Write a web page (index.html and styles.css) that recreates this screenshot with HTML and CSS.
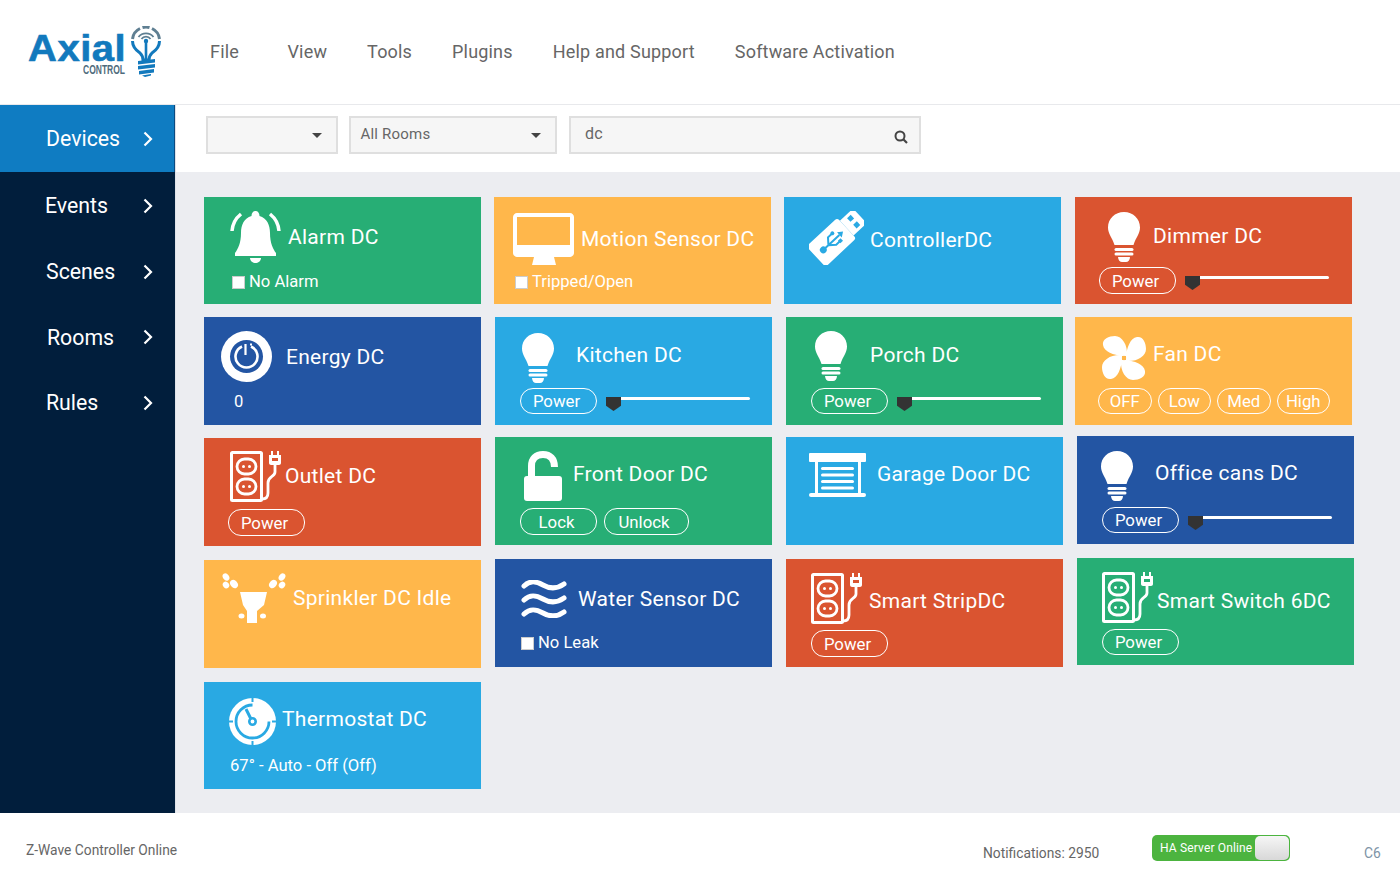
FILE: index.html
```html
<!DOCTYPE html>
<html lang="en">
<head>
<meta charset="utf-8">
<title>Axial Control</title>
<link rel="stylesheet" href="styles.css">
</head>
<body>
<svg class="defs" width="0" height="0" aria-hidden="true">
  <defs>
    <symbol id="bulb" viewBox="0 0 32 50">
      <path d="M16 0C7 0 0 6.500 0 15.500C0 22 4 25 6.500 33H25.500C28 25 32 22 32 15.500C32 6.500 25 0 16 0Z" fill="#fff"/>
      <rect x="6.500" y="36" width="19" height="3" rx="1.500" fill="#fff"/>
      <rect x="6.500" y="40.500" width="19" height="3" rx="1.500" fill="#fff"/>
      <path d="M10 45H22C22 48 20 50 18 50H14C12 50 10 48 10 45Z" fill="#fff"/>
    </symbol>
    <symbol id="outlet" viewBox="0 0 52 51">
      <rect x="1.500" y="1.500" width="30" height="48" rx="1" fill="none" stroke="#fff" stroke-width="3"/>
      <rect x="7" y="8" width="19" height="15" rx="7.500" fill="none" stroke="#fff" stroke-width="2.800"/>
      <rect x="7" y="28" width="19" height="15" rx="7.500" fill="none" stroke="#fff" stroke-width="2.800"/>
      <circle cx="13.500" cy="15.500" r="1.500" fill="#fff"/><circle cx="19.500" cy="15.500" r="1.500" fill="#fff"/>
      <circle cx="13.500" cy="35.500" r="1.500" fill="#fff"/><circle cx="19.500" cy="35.500" r="1.500" fill="#fff"/>
      <path d="M45 13V21C45 26 38 25 38 32V42C38 46 36 48 32 48" fill="none" stroke="#fff" stroke-width="2.800"/>
      <path d="M41 0h2v4h4V0h2v4h2v8c0 1-1 2-2 2h-8c-1 0-2-1-2-2V4h2z M42 7v3h6V7z" fill="#fff" fill-rule="evenodd"/>
    </symbol>
  </defs>
</svg>

<header class="topbar">
  <div class="logo">
    <div class="logo-text">
      <span class="logo-name">Axial</span>
      <span class="logo-sub">CONTROL</span>
    </div>
    <svg class="logo-bulb" viewBox="0 0 30 51" width="30" height="51">
      <path d="M1.500 15C1.500 21 6 25 9 27C11 29 12 31 12 34H18C18 31 19 29 21 27C24 25 28.500 21 28.500 15" fill="none" stroke="#1279bd" stroke-width="3"/>
      <path d="M1.500 13A13.500 13.500 0 0 1 9 2.500M11.500 1.500A13.500 13.500 0 0 1 18.500 1.500M21 2.500A13.500 13.500 0 0 1 28.500 13" fill="none" stroke="#5f7f92" stroke-width="3"/>
      <path d="M7.500 11A9.500 9.500 0 0 1 22.500 11M10.500 13A5.500 5.500 0 0 1 19.500 13" fill="none" stroke="#5f7f92" stroke-width="1.800"/>
      <circle cx="15" cy="15" r="2.200" fill="#1279bd"/>
      <rect x="13.700" y="15" width="2.600" height="19" fill="#1279bd"/>
      <path d="M7 35L24 33V36.500L7 38.500ZM7 40L24 38V41.500L7 43.500ZM8 45L23 43V46.500L8 48.500ZM11 49.500L20 48V49.500L14 51Z" fill="#1279bd"/>
    </svg>
  </div>
  <nav class="menu">
    <a class="menu-file">File</a>
    <a>View</a>
    <a>Tools</a>
    <a>Plugins</a>
    <a>Help and Support</a>
    <a>Software Activation</a>
  </nav>
</header>

<div class="shell">
  <aside class="sidebar">
    <a class="side-item active"><span class="side-label">Devices</span><svg class="chev" viewBox="0 0 10 16" width="10" height="16"><path d="M1.500 1.500L8 8L1.500 14.500" fill="none" stroke="#fff" stroke-width="2.200"/></svg></a>
    <a class="side-item events"><span class="side-label">Events</span><svg class="chev" viewBox="0 0 10 16" width="10" height="16"><path d="M1.500 1.500L8 8L1.500 14.500" fill="none" stroke="#fff" stroke-width="2.200"/></svg></a>
    <a class="side-item scenes"><span class="side-label">Scenes</span><svg class="chev" viewBox="0 0 10 16" width="10" height="16"><path d="M1.500 1.500L8 8L1.500 14.500" fill="none" stroke="#fff" stroke-width="2.200"/></svg></a>
    <a class="side-item rooms"><span class="side-label">Rooms</span><svg class="chev" viewBox="0 0 10 16" width="10" height="16"><path d="M1.500 1.500L8 8L1.500 14.500" fill="none" stroke="#fff" stroke-width="2.200"/></svg></a>
    <a class="side-item scenes"><span class="side-label">Rules</span><svg class="chev" viewBox="0 0 10 16" width="10" height="16"><path d="M1.500 1.500L8 8L1.500 14.500" fill="none" stroke="#fff" stroke-width="2.200"/></svg></a>
  </aside>

  <main class="content">
    <div class="toolbar">
      <div class="field sel-a"><span class="caret"></span></div>
      <div class="field sel-b"><span class="field-text">All Rooms</span><span class="caret"></span></div>
      <div class="field search"><span class="field-text search-text">dc</span>
        <svg class="search-icon" viewBox="0 0 14 14" width="14" height="14"><circle cx="6" cy="6" r="4.500" fill="none" stroke="#444" stroke-width="2"/><path d="M9.300 9.300L13 13" stroke="#444" stroke-width="2.200"/></svg>
      </div>
    </div>

    <div class="grid">
      <section class="tile green t-alarm">
        <div class="head">
          <svg class="icon" viewBox="0 0 51 53" width="51" height="53">
            <path d="M25.500 0C23 0 21.500 2 21.500 5C14 7 11 14 11 22C11 32 8 38 5 42V45H46V42C43 38 40 32 40 22C40 14 37 7 29.500 5C29.500 2 28 0 25.500 0Z" fill="#fff"/>
            <path d="M20 47H31C31 50 28 52 25.500 52C23 52 20 50 20 47Z" fill="#fff"/>
            <path d="M2 20C2.500 13 6 7 11 3M49 20C48.500 13 45 7 40 3" fill="none" stroke="#fff" stroke-width="3.500"/>
          </svg>
          <h2 class="title">Alarm DC</h2>
        </div>
        <div class="foot"><span class="check"></span><span class="status">No Alarm</span></div>
      </section>

      <section class="tile orange t-motion">
        <div class="head">
          <svg class="icon" viewBox="0 0 61 52" width="61" height="52">
            <path d="M4 0H57C59 0 61 2 61 4V40C61 42 59 44 57 44H41L43 52H19L21 44H4C2 44 0 42 0 40V4C0 2 2 0 4 0ZM4 4V32H57V4Z" fill="#fff" fill-rule="evenodd"/>
          </svg>
          <h2 class="title">Motion Sensor DC</h2>
        </div>
        <div class="foot"><span class="check"></span><span class="status">Tripped/Open</span></div>
      </section>

      <section class="tile blue t-controller">
        <div class="head">
          <svg class="icon" viewBox="0 0 55 54" width="55" height="54">
            <g transform="translate(26 28) rotate(-43)">
              <rect x="-26" y="-14" width="42" height="28" rx="3" fill="#fff"/>
              <path d="M16 -10H34V10H16Z" fill="#fff"/>
              <rect x="23" y="-7" width="5" height="5" fill="#29a9e3"/>
              <rect x="23" y="2" width="5" height="5" fill="#29a9e3"/>
              <g fill="none" stroke="#29a9e3" stroke-width="2">
                <path d="M-15 0H6M-9 0L-4 -6H1M-9 0L-3 5H2"/>
              </g>
              <circle cx="-16" cy="0" r="3.400" fill="#29a9e3"/>
              <path d="M6 -3.500L11 0L6 3.500Z" fill="#29a9e3"/>
              <circle cx="2" cy="-6" r="2" fill="#29a9e3"/>
              <rect x="1" y="3.200" width="3.600" height="3.600" fill="#29a9e3"/>
            </g>
          </svg>
          <h2 class="title">ControllerDC</h2>
        </div>
      </section>

      <section class="tile red t-dimmer">
        <div class="head">
          <svg class="icon bulb"><use href="#bulb"/></svg>
          <h2 class="title">Dimmer DC</h2>
        </div>
        <div class="foot controls"><button class="pill">Power</button><div class="slider"><span class="thumb"></span><span class="track"></span></div></div>
      </section>

      <section class="tile navy t-energy">
        <div class="head">
          <svg class="icon" viewBox="0 0 51 51" width="51" height="51">
            <circle cx="25.500" cy="25.500" r="25.500" fill="#fff"/>
            <circle cx="25.500" cy="25.500" r="16.500" fill="#2355a3"/>
            <path d="M21 15.500A11 11 0 1 0 30 15.500" fill="none" stroke="#fff" stroke-width="2.600"/>
            <path d="M24.500 13V24" stroke="#fff" stroke-width="2.200"/>
            <path d="M30 12.500V14.500" stroke="#fff" stroke-width="2"/>
          </svg>
          <h2 class="title">Energy DC</h2>
        </div>
        <div class="foot"><span class="status">0</span></div>
      </section>

      <section class="tile blue t-kitchen raised">
        <div class="head">
          <svg class="icon bulb"><use href="#bulb"/></svg>
          <h2 class="title">Kitchen DC</h2>
        </div>
        <div class="foot controls"><button class="pill">Power</button><div class="slider"><span class="thumb"></span><span class="track"></span></div></div>
      </section>

      <section class="tile green t-porch raised">
        <div class="head">
          <svg class="icon bulb"><use href="#bulb"/></svg>
          <h2 class="title">Porch DC</h2>
        </div>
        <div class="foot controls"><button class="pill">Power</button><div class="slider"><span class="thumb"></span><span class="track"></span></div></div>
      </section>

      <section class="tile orange t-fan raised">
        <div class="head">
          <svg class="icon" viewBox="0 0 44 44" width="44" height="44">
            <g fill="#fff">
              <path d="M20 20C12 19 2 16 1 9C0 3 7 0 13 0C20 0 26 9 25 20Z"/>
              <path d="M20 20C12 19 2 16 1 9C0 3 7 0 13 0C20 0 26 9 25 20Z" transform="rotate(90 22 22)"/>
              <path d="M20 20C12 19 2 16 1 9C0 3 7 0 13 0C20 0 26 9 25 20Z" transform="rotate(180 22 22)"/>
              <path d="M20 20C12 19 2 16 1 9C0 3 7 0 13 0C20 0 26 9 25 20Z" transform="rotate(270 22 22)"/>
            </g>
            <circle cx="22" cy="22" r="2.200" fill="#ffb74b"/>
          </svg>
          <h2 class="title">Fan DC</h2>
        </div>
        <div class="foot controls fan-controls"><button class="pill small">OFF</button><button class="pill small">Low</button><button class="pill small">Med</button><button class="pill small">High</button></div>
      </section>

      <section class="tile red t-outlet">
        <div class="head">
          <svg class="icon plug"><use href="#outlet"/></svg>
          <h2 class="title">Outlet DC</h2>
        </div>
        <div class="foot controls"><button class="pill">Power</button></div>
      </section>

      <section class="tile green t-door">
        <div class="head">
          <svg class="icon" viewBox="0 0 38 50" width="38" height="50">
            <rect x="0" y="25" width="38" height="25" rx="3" fill="#fff"/>
            <path d="M7.500 27V15C7.500 7.500 12 3.500 19 3.500C26 3.500 30.500 8 30.500 16" fill="none" stroke="#fff" stroke-width="7"/>
          </svg>
          <h2 class="title">Front Door DC</h2>
        </div>
        <div class="foot controls"><button class="pill">Lock</button><button class="pill wide">Unlock</button></div>
      </section>

      <section class="tile blue t-garage">
        <div class="head">
          <svg class="icon" viewBox="0 0 57 45" width="57" height="45">
            <rect x="0" y="0" width="57" height="9" rx="1" fill="#fff"/>
            <rect x="0" y="40" width="57" height="4" rx="2" fill="#fff"/>
            <rect x="6" y="8" width="3" height="33" fill="#fff"/>
            <rect x="49" y="8" width="3" height="33" fill="#fff"/>
            <rect x="12" y="14" width="33" height="3" rx="1.500" fill="#fff"/>
            <rect x="12" y="20.500" width="33" height="3" rx="1.500" fill="#fff"/>
            <rect x="12" y="27" width="33" height="3" rx="1.500" fill="#fff"/>
            <rect x="12" y="33.500" width="33" height="3" rx="1.500" fill="#fff"/>
          </svg>
          <h2 class="title">Garage Door DC</h2>
        </div>
      </section>

      <section class="tile navy t-office raised">
        <div class="head">
          <svg class="icon bulb"><use href="#bulb"/></svg>
          <h2 class="title">Office cans DC</h2>
        </div>
        <div class="foot controls"><button class="pill">Power</button><div class="slider"><span class="thumb"></span><span class="track"></span></div></div>
      </section>

      <section class="tile orange t-sprinkler">
        <div class="head">
          <svg class="icon" viewBox="0 0 64 50" width="64" height="50">
            <path d="M18 19H45L42 32L35 38V50H25V38L21 32Z" fill="#fff"/>
            <ellipse cx="19.500" cy="43" rx="3" ry="2.500" fill="#fff"/>
            <ellipse cx="41" cy="43" rx="3" ry="2.500" fill="#fff"/>
            <g fill="#fff">
              <ellipse cx="4" cy="4" rx="3" ry="4" transform="rotate(-35 4 4)"/>
              <ellipse cx="12" cy="11" rx="3.500" ry="4.500" transform="rotate(-40 12 11)"/>
              <ellipse cx="4" cy="12" rx="3" ry="3.500" transform="rotate(-40 4 12)"/>
              <ellipse cx="60" cy="4" rx="3" ry="4" transform="rotate(35 60 4)"/>
              <ellipse cx="51" cy="11" rx="3.500" ry="4.500" transform="rotate(40 51 11)"/>
              <ellipse cx="60" cy="12" rx="3" ry="3.500" transform="rotate(40 60 12)"/>
            </g>
          </svg>
          <h2 class="title">Sprinkler DC Idle</h2>
        </div>
      </section>

      <section class="tile navy t-water">
        <div class="head">
          <svg class="icon" viewBox="0 0 46 38" width="46" height="38">
            <path d="M3 6C9 0 15 1 22 5S36 9 43 4M3 20C9 14 15 15 22 19S36 23 43 18M3 34C9 28 15 29 22 33S36 37 43 32" fill="none" stroke="#fff" stroke-width="5" stroke-linecap="round"/>
          </svg>
          <h2 class="title">Water Sensor DC</h2>
        </div>
        <div class="foot"><span class="check"></span><span class="status">No Leak</span></div>
      </section>

      <section class="tile red t-strip">
        <div class="head">
          <svg class="icon plug"><use href="#outlet"/></svg>
          <h2 class="title">Smart StripDC</h2>
        </div>
        <div class="foot controls"><button class="pill">Power</button></div>
      </section>

      <section class="tile green t-switch raised">
        <div class="head">
          <svg class="icon plug"><use href="#outlet"/></svg>
          <h2 class="title">Smart Switch 6DC</h2>
        </div>
        <div class="foot controls"><button class="pill">Power</button></div>
      </section>

      <section class="tile blue t-thermo">
        <div class="head">
          <svg class="icon" viewBox="0 0 47 47" width="47" height="47">
            <circle cx="23.500" cy="23.500" r="23.500" fill="#fff"/>
            <path d="M23.500 0V4M23.500 43V47M0 23.500H4M43 23.500H47" stroke="#29a9e3" stroke-width="2"/>
            <path d="M40 23.500A16.500 16.500 0 1 1 23.500 7" fill="none" stroke="#29a9e3" stroke-width="2.800"/>
            <path d="M17 11L22 21" stroke="#29a9e3" stroke-width="3"/>
            <circle cx="23.500" cy="23.500" r="3.200" fill="#fff" stroke="#29a9e3" stroke-width="2.600"/>
          </svg>
          <h2 class="title">Thermostat DC</h2>
        </div>
        <div class="foot"><span class="status">67° - Auto - Off (Off)</span></div>
      </section>
    </div>
  </main>
</div>

<footer class="statusbar">
  <span class="zwave">Z-Wave Controller Online</span>
  <span class="notes">Notifications: 2950</span>
  <div class="switch"><span class="switch-label">HA Server Online</span><span class="knob"></span></div>
  <span class="version">C6</span>
</footer>
</body>
</html>
```
FILE: styles.css
```css
* { box-sizing: border-box; }
html, body { margin: 0; height: 100%; }
body {
  width: 1400px;
  height: 884px;
  overflow: hidden;
  background: #fff;
  font-family: Roboto, "Liberation Sans", sans-serif;
  display: flex;
  flex-direction: column;
}
.defs { position: absolute; }

/* top bar */
.topbar {
  height: 105px;
  flex: none;
  display: flex;
  align-items: flex-start;
  border-bottom: 1px solid #e8e9ec;
}
.logo {
  width: 210px;
  flex: none;
  display: flex;
  align-items: flex-start;
  padding: 26px 0 0 28px;
}
.logo-text { width: 103px; display: flex; flex-direction: column; align-items: flex-start; }
.logo-name {
  font-family: "Liberation Sans", Arial, sans-serif;
  font-weight: 700;
  font-size: 37px;
  line-height: 34px;
  margin-top: 6px;
  letter-spacing: .5px;
  color: #1279bd;
  -webkit-text-stroke: .6px #1279bd;
  transform: scaleX(1.08);
  transform-origin: left center;
}
.logo-sub {
  font-family: "Liberation Sans", sans-serif;
  font-size: 13.500px;
  font-weight: 700;
  line-height: 12px;
  margin: -2px 0 0 55px;
  color: #4f6b7c;
  white-space: nowrap;
  transform: scaleX(.63);
  transform-origin: left center;
}
.menu {
  display: flex;
  padding-top: 41px;
  font-size: 18px;
  line-height: 21px;
  letter-spacing: .18px;
  color: #666;
}
.menu a { margin-right: 40px; white-space: nowrap; }
.menu .menu-file { margin-right: 48.500px; }

/* shell */
.shell { flex: 1; display: flex; min-height: 0; }
.sidebar {
  width: 176px;
  flex: none;
  background: #011e3c;
  border-right: 1px solid #dfe2e8;
  color: #fff;
}
.side-item {
  height: 66px;
  display: flex;
  align-items: center;
  justify-content: space-between;
  padding: 0 22px 0 46px;
  font-size: 21.300px;
}
.side-item.active { height: 67px; background: #0f7cc2; border-right: 1px solid #0b4a80; padding-right: 21px; }
.side-item.events { height: 67px; padding-left: 45px; }
.side-item.scenes { height: 65px; }
.side-item.rooms { padding-left: 47px; }

/* content */
.content { flex: 1; display: flex; flex-direction: column; background: #ecedf1; min-width: 0; }
.toolbar {
  height: 67px;
  flex: none;
  background: #fff;
  display: flex;
  padding: 11px 0 0 30px;
  align-items: flex-start;
}
.field {
  height: 38px;
  background: #f6f6f6;
  border: 2px solid #dfdfdf;
  display: flex;
  align-items: center;
  font-size: 15px;
  letter-spacing: .2px;
  color: #666;
}
.sel-a { width: 132px; margin-right: 11px; }
.sel-b { width: 208px; margin-right: 12px; }
.search { width: 352px; }
.field-text { padding-left: 9.500px; margin-top: -3px; }
.search-text { padding-left: 14px; font-size: 16px; }
.caret {
  margin-left: auto;
  margin-right: 14px;
  width: 0;
  height: 0;
  border: 5px solid transparent;
  border-top-color: #444;
  border-bottom: 0;
}
.search-icon { margin-left: auto; margin-right: 11px; margin-top: 3px; }

/* tiles */
.grid {
  display: grid;
  grid-template-columns: repeat(4, 291px);
  grid-template-rows: 120px 119px 122px 124px 107px;
  padding: 25px 0 0 28px;
}
.tile {
  width: 277px;
  height: 108px;
  color: #fff;
  margin-top: var(--mt, 0);
  margin-left: var(--ml, 0);
}
.green { background: #27ae75; }
.orange { background: #ffb74b; }
.blue { background: #29a9e3; }
.red { background: #da5430; }
.navy { background: #2355a3; }

.head {
  height: 70px;
  display: flex;
  align-items: flex-start;
  padding: var(--iy) 0 0 var(--ix);
}
.icon { flex: none; display: block; }
.bulb { width: 32px; height: 50px; }
.plug { width: 52px; height: 51px; }
.title {
  margin: var(--ty) 0 0 var(--gap);
  font-size: 21px;
  font-weight: 400;
  line-height: 24px;
  letter-spacing: .28px;
  white-space: nowrap;
}
.foot {
  display: flex;
  align-items: center;
  padding: var(--fy, 0) 0 0 var(--fx, 0);
  font-size: 16.600px;
  line-height: 20px;
}
.check {
  width: 13px;
  height: 13px;
  background: #fff;
  border: 1px solid #ccc;
  margin-right: 4px;
  flex: none;
}
.controls { align-items: flex-start; gap: 7px; }
.fan-controls { gap: 6px; }
.pill {
  width: 77px;
  height: 27px;
  padding: 0 4px 0 0;
  background: transparent;
  border: 1px solid #fff;
  border-radius: 13px;
  color: #fff;
  font-family: inherit;
  font-size: 16.800px;
  line-height: 24px;
}
.pill.small { width: 53.500px; padding: 0; }
.pill.wide { width: 85px; padding-right: 5px; }
.raised .pill { height: 26px; }
.slider { display: flex; align-items: flex-start; width: 144px; margin-left: 2px; padding-top: 9px; }
.thumb {
  width: 15px;
  height: 14px;
  background: #333;
  flex: none;
  clip-path: polygon(0 0, 100% 0, 100% 62%, 50% 100%, 0 62%);
}
.track { flex: 1; height: 3px; background: #fff; border-radius: 0 2px 2px 0; }

.t-alarm { --ix: 26px; --iy: 14px; --gap: 7px; --ty: 14px; --fx: 28px; --fy: 5px; height: 107px; }
.t-motion { --ix: 19px; --iy: 16px; --gap: 7px; --ty: 14px; --fx: 21px; --fy: 5px; --ml: -1px; height: 107px; }
.t-controller { --ix: 25px; --iy: 14px; --gap: 6px; --ty: 17px; --ml: -2px; height: 107px; }
.t-dimmer { --ix: 33px; --iy: 15px; --gap: 13px; --ty: 12px; --fx: 24px; --fy: 0px; --ml: -2px; height: 107px; }
.t-energy { --ix: 17px; --iy: 14px; --gap: 14px; --ty: 14px; --fx: 30px; --fy: 5px; }
.t-kitchen { --ix: 27px; --iy: 16px; --gap: 22px; --ty: 10px; --fx: 25px; --fy: 1px; }
.t-porch { --ix: 29px; --iy: 14px; --gap: 23px; --ty: 12px; --fx: 25px; --fy: 1px; }
.t-fan { --ix: 27px; --iy: 19px; --gap: 7px; --ty: 6px; --fx: 23px; --fy: 1px; --ml: -2px; }
.t-outlet { --ix: 26px; --iy: 13px; --gap: 3px; --ty: 13px; --fx: 24px; --fy: 1px; --mt: 2px; }
.t-door { --ix: 29px; --iy: 14px; --gap: 11px; --ty: 11px; --fx: 25px; --fy: 1px; --mt: 1px; }
.t-garage { --ix: 23px; --iy: 16px; --gap: 11px; --ty: 9px; --mt: 1px; }
.t-office { --ix: 24px; --iy: 15px; --gap: 22px; --ty: 10px; --fx: 25px; --fy: 1px; }
.t-sprinkler { --ix: 18px; --iy: 13px; --gap: 7px; --ty: 13px; --mt: 2px; }
.t-water { --ix: 26px; --iy: 21px; --gap: 11px; --ty: 7px; --fx: 26px; --fy: 4px; --mt: 1px; }
.t-strip { --ix: 25px; --iy: 14px; --gap: 6px; --ty: 16px; --fx: 25px; --fy: 1px; --mt: 1px; }
.t-switch { --ix: 25px; --iy: 14px; --gap: 3px; --ty: 17px; --fx: 25px; --fy: 1px; height: 107px; }
.t-thermo { --ix: 25px; --iy: 16px; --gap: 6px; --ty: 9px; --fx: 26px; --fy: 4px; height: 107px; }

/* footer */
.statusbar {
  height: 71px;
  flex: none;
  background: #fff;
  display: flex;
  align-items: flex-start;
  padding-left: 26px;
  font-size: 13.800px;
  line-height: 18px;
  color: #666;
}
.zwave { width: 957px; padding-top: 28px; }
.notes { width: 169px; padding-top: 31px; }
.switch {
  width: 138px;
  height: 26px;
  margin-top: 22px;
  background: #4cb43f;
  border-radius: 5px;
  display: flex;
  align-items: center;
  justify-content: space-between;
  padding-left: 8px;
  color: #fff;
  font-size: 12px;
  letter-spacing: .15px;
}
.knob {
  width: 34px;
  height: 24px;
  margin-right: 1px;
  border-radius: 5px;
  background: linear-gradient(#f6f6f6, #d8d8d8);
}
.version { margin-left: 74px; padding-top: 31px; color: #7d93a6; }
```
